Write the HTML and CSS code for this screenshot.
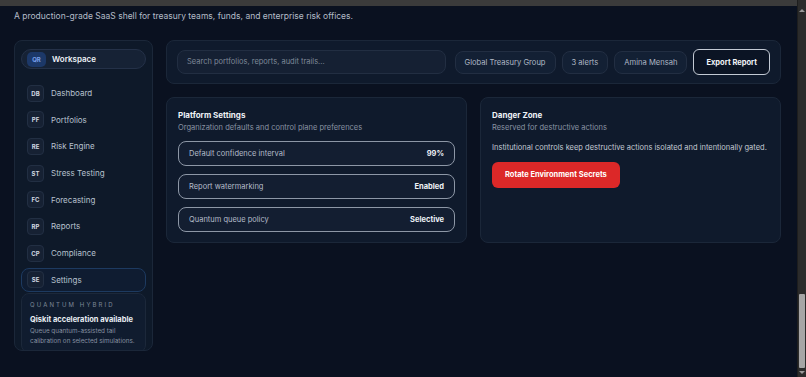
FILE: index.html
```html
<!DOCTYPE html>
<html lang="en">
  <head>
    <meta charset="UTF-8" />
    <meta name="viewport" content="width=device-width, initial-scale=1.0" />
    <title>Treasury Shell - Settings</title>
    <link rel="stylesheet" href="styles.css">
  </head>
  <body>
    <div class="window">
      <div class="viewport">
        <div class="topband"></div>
        <p class="tagline">A production-grade SaaS shell for treasury teams, funds, and enterprise risk offices.</p>

        <div class="shell">
          <!-- 左側導覽 -->
          <aside class="sidebar">
            <div class="workspace">
              <span class="ws-badge">QR</span>
              <span class="ws-name">Workspace</span>
            </div>
            <ul class="nav">
              <li class="nav-item"><span class="badge">DB</span>Dashboard</li>
              <li class="nav-item"><span class="badge">PF</span>Portfolios</li>
              <li class="nav-item"><span class="badge">RE</span>Risk Engine</li>
              <li class="nav-item"><span class="badge">ST</span>Stress Testing</li>
              <li class="nav-item"><span class="badge">FC</span>Forecasting</li>
              <li class="nav-item"><span class="badge">RP</span>Reports</li>
              <li class="nav-item"><span class="badge">CP</span>Compliance</li>
              <li class="nav-item active"><span class="badge">SE</span>Settings</li>
            </ul>
            <div class="promo">
              <div class="promo-kicker">QUANTUM HYBRID</div>
              <div class="promo-title">Qiskit acceleration available</div>
              <p class="promo-text">Queue quantum-assisted tail calibration on selected simulations.</p>
            </div>
          </aside>

          <main class="main">
            <!-- 上方工具列 -->
            <div class="toolbar">
              <div class="search">Search portfolios, reports, audit trails...</div>
              <span class="chip">Global Treasury Group</span>
              <span class="chip">3 alerts</span>
              <span class="chip">Amina Mensah</span>
              <button class="export">Export Report</button>
            </div>

            <div class="cards">
              <section class="card">
                <h3 class="card-title">Platform Settings</h3>
                <p class="card-sub">Organization defaults and control plane preferences</p>
                <div class="setting"><span>Default confidence interval</span><b>99%</b></div>
                <div class="setting"><span>Report watermarking</span><b>Enabled</b></div>
                <div class="setting"><span>Quantum queue policy</span><b>Selective</b></div>
              </section>
              <section class="card">
                <h3 class="card-title">Danger Zone</h3>
                <p class="card-sub">Reserved for destructive actions</p>
                <p class="card-text">Institutional controls keep destructive actions isolated and intentionally gated.</p>
                <button class="danger">Rotate Environment Secrets</button>
              </section>
            </div>
          </main>
        </div>
      </div>

      <!-- 捲軸 -->
      <div class="scrollbar">
        <span class="arrow up"></span>
        <div class="track"><div class="thumb"></div></div>
        <span class="arrow down"></span>
      </div>
    </div>
  </body>
</html>
```

FILE: styles.css
```css
* {
  box-sizing: border-box;
}
html, body {
  margin: 0;
  height: 377px;
  overflow: hidden;
}
body {
  background: #0a1120;
  font-family: Inter, "Noto Sans", sans-serif;
  color: #e6ebf2;
}
.window {
  display: flex;
  height: 377px;
}
.viewport {
  flex: 1;
  min-width: 0;
}
.topband {
  height: 6px;
  background: #3b3b3b;
}
.tagline {
  margin: 0;
  padding-left: 14px;
  height: 20px;
  line-height: 20px;
  font-size: 8.5px;
  color: #b4bcc8;
}
.shell {
  display: grid;
  grid-template-columns: 139px 1fr;
  gap: 13px;
  margin-top: 14px;
  padding: 0 16px 0 14px;
  align-items: start;
}

/* sidebar */
.sidebar {
  height: 311px;
  overflow: hidden;
  background: #0e1929;
  border: 1px solid #1b2739;
  border-radius: 8px;
  padding: 8px 6px;
}
.workspace {
  display: flex;
  align-items: center;
  height: 20px;
  padding: 0 5px;
  background: #162235;
  border: 1px solid #243148;
  border-radius: 10px;
}
.ws-badge {
  width: 19px;
  height: 15px;
  line-height: 15px;
  text-align: center;
  border-radius: 5px;
  background: #1c3868;
  color: #7aa2ee;
  font-size: 6px;
  font-weight: 700;
}
.ws-name {
  margin-left: 6px;
  font-size: 8px;
  font-weight: 600;
  color: #eef2f7;
}
.nav {
  list-style: none;
  margin: 12px 0 0;
  padding: 0;
  display: flex;
  flex-direction: column;
  gap: 2.7px;
}
.nav-item {
  display: flex;
  align-items: center;
  height: 24px;
  padding: 0 5px;
  border: 1px solid transparent;
  border-radius: 8px;
  font-size: 8px;
  color: #b6c0cd;
}
.nav-item.active {
  border-color: #1d3a60;
  background: #0f1c31;
}
.badge {
  width: 17px;
  height: 17px;
  line-height: 15px;
  text-align: center;
  margin-right: 7px;
  border-radius: 4px;
  background: #162133;
  border: 1px solid #222f43;
  color: #d3d9e2;
  font-size: 6px;
  font-weight: 700;
}
.promo {
  margin-top: 1px;
  padding: 6px 5px 6px 8px;
  border: 1px solid #1c283a;
  border-radius: 8px;
  background: #101c2f;
}
.promo-kicker {
  font-size: 6px;
  letter-spacing: 2.1px;
  color: #7d8898;
  line-height: 10px;
}
.promo-title {
  margin-top: 4px;
  font-size: 7.5px;
  font-weight: 700;
  line-height: 11px;
  white-space: nowrap;
  color: #e9eef4;
}
.promo-text {
  margin: 1px 0 0;
  font-size: 6.3px;
  line-height: 10px;
  color: #8791a1;
}

/* main area */
.toolbar {
  display: flex;
  align-items: center;
  gap: 6px;
  height: 44px;
  padding: 0 10px;
  background: #0f1a2c;
  border: 1px solid #1b2739;
  border-radius: 8px;
}
.search {
  flex: 1;
  height: 24px;
  line-height: 22px;
  margin-right: 3px;
  padding: 0 9px;
  background: #152033;
  border: 1px solid #222e42;
  border-radius: 8px;
  font-size: 7.5px;
  color: #7e8898;
}
.chip {
  height: 23px;
  line-height: 21px;
  padding: 0 9px;
  background: #132034;
  border: 1px solid #222e42;
  border-radius: 8px;
  font-size: 7.6px;
  color: #aeb7c4;
}
.export {
  height: 26px;
  padding: 0 12px;
  background: #0b1424;
  border: 1px solid #c3cad4;
  border-radius: 6px;
  font-family: inherit;
  font-size: 7.5px;
  font-weight: 700;
  color: #f2f5f9;
}
.cards {
  display: grid;
  grid-template-columns: 1fr 1fr;
  gap: 13px;
  margin-top: 13px;
}
.card {
  height: 146px;
  padding: 10px 11px;
  background: #0f1a2c;
  border: 1px solid #1b2739;
  border-radius: 8px;
}
.card-title {
  margin: 0;
  font-size: 8px;
  font-weight: 700;
  line-height: 14px;
  color: #eef2f7;
}
.card-sub {
  margin: 0 0 8px;
  font-size: 7.5px;
  line-height: 11px;
  color: #8993a3;
}
.setting {
  display: flex;
  justify-content: space-between;
  align-items: center;
  height: 25px;
  margin-bottom: 8px;
  padding: 0 10px;
  border: 1px solid #8d97a6;
  border-radius: 8px;
  background: #131e31;
  font-size: 7.5px;
  color: #b3bcc9;
}
.setting b {
  color: #eef2f7;
  font-weight: 700;
}
.card-text {
  margin: 9px 0 8px;
  font-size: 7.5px;
  line-height: 11px;
  color: #c3cad4;
}
.danger {
  height: 26px;
  padding: 0 13px;
  background: #dc2828;
  border: none;
  border-radius: 6px;
  font-family: inherit;
  font-size: 7.5px;
  font-weight: 700;
  color: #fff;
}

/* scrollbar */
.scrollbar {
  width: 9px;
  display: flex;
  flex-direction: column;
  align-items: center;
  background: #2b2b2b;
  border-left: 1px solid #1e1e1e;
}
.arrow {
  width: 0;
  height: 0;
  margin: 9px 0 2px;
  border-left: 3px solid transparent;
  border-right: 3px solid transparent;
}
.arrow.up {
  border-bottom: 3px solid #9a9a9a;
}
.arrow.down {
  margin: 2px 0 3px;
  border-top: 3px solid #9a9a9a;
}
.track {
  flex: 1;
  width: 100%;
  display: flex;
  flex-direction: column;
  justify-content: flex-end;
  padding: 0 1px 1px;
}
.thumb {
  height: 74px;
  background: #a6a6a6;
  border-radius: 1px;
}
```
